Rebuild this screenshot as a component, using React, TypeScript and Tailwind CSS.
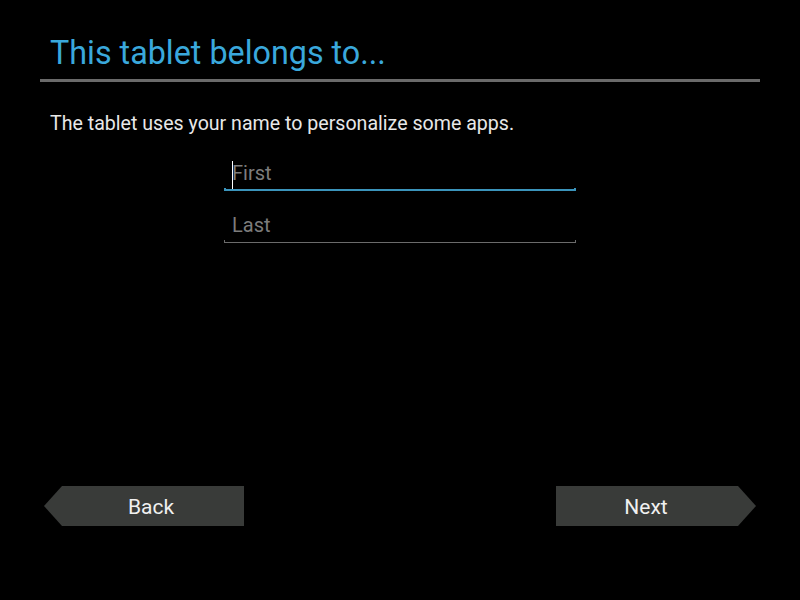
export default function App() {
  return (
    <main className="flex h-[600px] w-[800px] flex-col bg-black font-['Roboto',sans-serif]">
      <header className="mx-10 mt-[33px] border-b-[3px] border-[#6a6a6a] pb-[6px]">
        <h1 className="pl-[10px] text-[32.3px] leading-[40px] text-[#3aa8dc]">
          This tablet belongs to...
        </h1>
      </header>

      <p className="mt-[30px] pl-[50px] text-[19.6px] leading-[24px] text-[#e8e8e8]">
        The tablet uses your name to personalize some apps.
      </p>

      <div className="mt-[18px] flex flex-col items-center">
        <div className="relative w-[352px] pt-[4px]">
          <span className="absolute left-[8px] top-[7px] h-[28px] w-[1px] bg-white" />
          <div className="pl-[8px] text-[20px] leading-[30px] text-[#7c7c7c]">First</div>
          <div className="h-[3px] border-x-[2px] border-b-[2px] border-[#3b94bb]" />
        </div>
        <div className="mt-[19px] w-[352px]">
          <div className="pl-[8px] text-[20px] leading-[30px] text-[#7c7c7c]">Last</div>
          <div className="h-[3px] border-x border-b border-[#6b6b6b]" />
        </div>
      </div>

      <div className="mt-auto mb-[74px] flex justify-between px-[44px]">
        <button className="flex h-[40px] w-[200px] items-center justify-center bg-[#393b39] pt-[3px] pl-[14px] text-[21px] text-[#f0f0f0] [clip-path:polygon(18px_0,100%_0,100%_100%,18px_100%,0_50%)]">
          Back
        </button>
        <button className="flex h-[40px] w-[200px] items-center justify-center bg-[#393b39] pt-[3px] pr-[20px] text-[21px] text-[#f0f0f0] [clip-path:polygon(0_0,182px_0,100%_50%,182px_100%,0_100%)]">
          Next
        </button>
      </div>
    </main>
  );
}
